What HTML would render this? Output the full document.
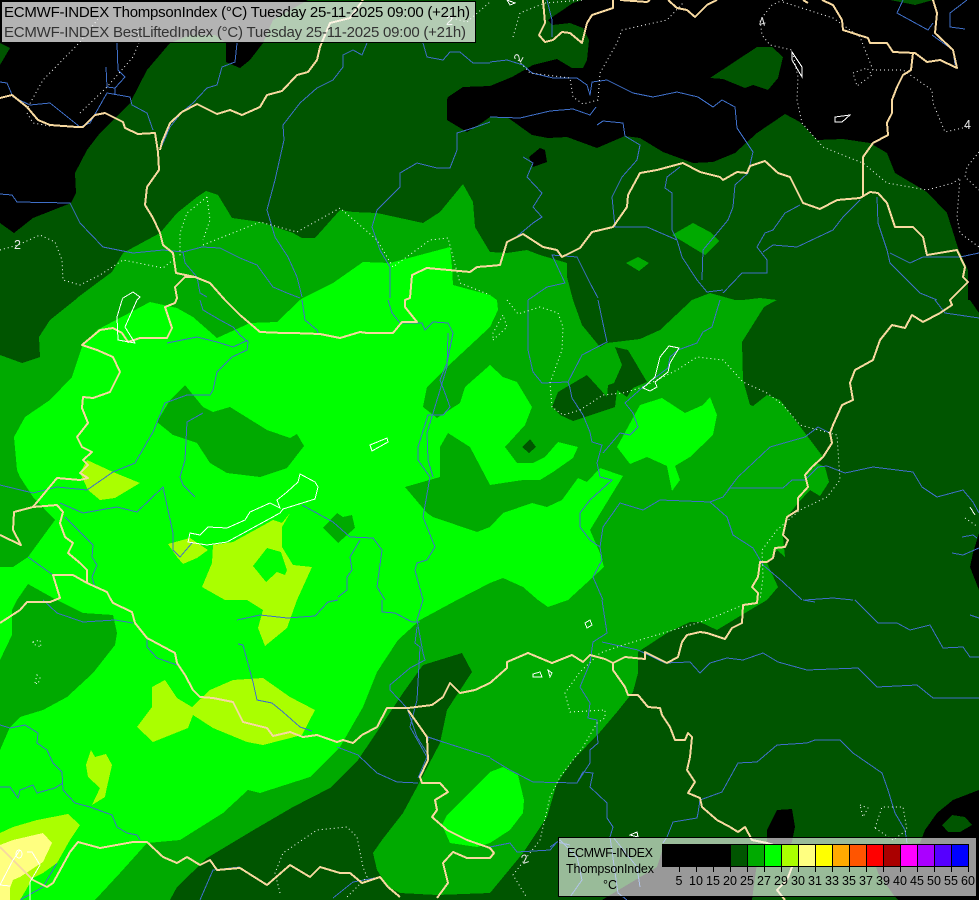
<!DOCTYPE html>
<html><head><meta charset="utf-8"><style>html,body{margin:0;padding:0;background:#005500}svg{display:block}text{font-family:"Liberation Sans",sans-serif}</style></head><body>
<svg xmlns="http://www.w3.org/2000/svg" width="979" height="900" viewBox="0 0 979 900">
<rect width="979" height="900" fill="#005500"/>
<g shape-rendering="crispEdges">
<g fill="#000">
<polygon points="0,0 308,0 273,20 263,43 250,60 240,68 226,62 226,43 215,35 190,35 170,43 147,70 130,103 100,133 87,150 75,173 76,193 71,203 33,218 14,233 0,223 0,65 10,48 0,43"/>
<polygon points="583,0 573,3 548,20 552,25 570,23 583,28 589,40 587,60 583,68 572,68 557,59 533,65 512,77 490,86 463,87 448,97 447,100 447,120 467,132 483,122 490,117 507,117 532,135 548,138 567,137 597,148 625,136 640,138 663,152 693,163 713,162 735,153 757,133 785,114 800,122 817,140 843,139 870,143 887,153 895,173 927,192 947,213 958,248 968,270 968,300 970,300 979,313 979,0 933,0 915,5 890,0"/>
<polygon points="979,533 973,553 970,567 979,590"/>
<polygon points="529,157 540,148 545,150 547,162 533,167"/>
<polygon points="602,900 657,867 663,848 767,847 767,830 777,810 792,809 795,827 792,842 787,847 757,863 752,900"/>
<polygon points="979,790 953,800 937,813 925,830 920,843 878,847 873,857 878,873 895,897 898,900 979,900"/>
</g>
<g fill="#005500">
<polygon points="710,78 757,47 772,47 783,57 778,78 768,90 753,85 745,88 723,79"/>
<polygon points="942,825 952,815 965,817 972,825 960,832 948,832"/>
</g>
<polygon fill="#00aa00" points="0,355 22,363 40,357 39,337 50,320 75,300 77,298 97,283 112,272 123,253 160,233 177,213 197,197 206,191 218,195 232,218 260,222 293,233 302,238 315,238 340,210 353,212 377,213 423,223 440,212 463,184 473,202 475,227 490,252 507,253 527,250 540,255 567,263 567,277 573,300 582,325 600,347 607,343 640,339 660,330 692,300 710,293 735,300 743,300 760,298 777,300 773,302 764,307 742,342 743,380 750,405 753,406 767,395 780,400 805,433 823,457 817,463 825,467 829,482 820,496 810,490 798,503 787,517 783,537 785,557 777,550 767,563 778,587 767,600 750,610 717,630 700,622 690,622 667,633 638,652 638,673 633,692 617,712 600,732 573,760 557,783 547,817 523,853 490,893 483,900 0,900"/>
<polygon fill="#00aa00" points="672,235 693,223 710,232 719,241 705,255"/>
<polygon fill="#00aa00" points="626,263 638,257 649,263 639,271"/>
<g fill="#005500">
<polygon points="615,347 628,350 647,382 633,388 627,397 617,390 615,407 573,421 560,415 552,407 558,392 587,375 607,397 608,385 614,383 622,365"/>
<polygon points="462,653 472,672 447,710 440,743 417,787 403,813 382,840 373,853 377,870 388,887 400,893 437,895 490,893 490,900 170,900 177,887 207,858 257,828 293,807 330,788 358,760 387,717 403,693 423,665"/>
</g>
<polygon fill="#00ff00" points="14,437 25,417 50,400 72,377 82,347 97,330 150,302 177,308 193,317 217,338 250,323 277,322 300,300 303,298 333,283 363,262 390,263 450,247 452,267 453,285 490,295 497,300 498,310 490,327 447,367 427,387 423,407 437,418 460,403 465,387 490,365 503,377 517,382 532,407 525,425 505,447 517,463 533,463 545,457 558,442 578,447 573,458 553,472 540,480 523,480 503,483 490,485 470,447 448,433 440,447 440,477 405,487 427,513 433,517 477,532 490,527 503,513 532,503 547,507 562,500 578,478 587,482 600,468 623,476 590,530 600,553 604,567 568,600 548,607 538,600 523,587 503,578 490,583 457,600 420,620 398,640 377,672 363,707 340,747 310,777 260,793 248,790 223,813 180,840 147,843 120,873 95,900 0,900 0,567 13,567 28,557 55,520 33,497 20,477 17,470"/>
<g fill="#00aa00">
<polygon points="157,422 170,400 185,385 203,407 213,412 230,407 267,430 290,438 297,434 304,446 287,468 260,477 227,473 210,463 197,443 173,435"/>
<polygon points="323,528 337,513 343,517 352,515 355,528 338,543"/>
<polygon points="17,600 28,584 53,598 57,600 83,613 113,615 117,633 115,645 93,673 67,697 43,710 20,717 10,727 0,750 0,660 12,635 12,610"/>
</g>
<g fill="#00ff00">
<polygon points="617,447 640,405 662,398 685,413 703,405 710,397 717,415 713,435 690,457 675,466 680,480 672,491 667,466 647,457 630,464"/>
<polygon points="490,772 503,767 518,775 524,800 523,813 510,830 490,843 477,847 450,843 442,825 447,815 467,795"/>
</g>
<polygon fill="#005500" points="522,447 530,439 536,447 529,453"/>
<g fill="#aaff00">
<polygon points="87,460 113,472 140,483 115,498 100,500 88,490 80,473"/>
<polygon points="168,544 190,538 208,550 197,558 183,564 177,557"/>
<polygon points="213,545 233,542 273,520 282,523 290,513 282,527 282,547 293,565 312,567 297,600 287,628 265,646 258,628 263,610 247,600 225,600 202,587 212,563"/>
<polygon points="137,727 152,707 152,687 165,680 177,698 192,707 210,690 233,680 263,678 290,697 315,710 302,735 263,745 247,742 213,728 193,715 188,728 153,742"/>
<polygon points="86,765 91,750 95,757 106,754 112,765 107,787 105,797 92,805 100,788 88,777"/>
<polygon points="0,833 13,827 37,820 68,814 80,825 70,840 57,863 43,873 33,878 20,900 0,900"/>
</g>
<polygon fill="#00ff00" points="253,566 267,548 281,552 287,570 285,575 277,572 266,582"/>
<polygon fill="#ffff80" points="0,845 13,840 43,833 52,843 43,862 20,877 13,880 10,888 10,900 0,900"/>
</g>

<!-- rivers -->
<g fill="none" stroke="#3f6fc8" stroke-width="1" stroke-linejoin="round" shape-rendering="crispEdges">
<polyline points="0,82 7,83 13,97 30,105 50,103 80,127 90,123 107,93 130,97 132,105 147,113 153,130"/>
<polyline points="117,43 118,70 125,77 115,88 107,87 106,67"/><polyline points="115,88 115,95"/>
<polyline points="237,43 235,62 222,67 217,85 207,88 193,103 182,112 170,127 160,150"/>
<polyline points="367,43 362,55 353,50 343,55 343,67 333,80 317,88 300,103 283,125 284,140 275,180 267,210 275,237 288,257 297,277 302,297"/>
<polyline points="423,43 427,57 443,60 450,52 460,52 473,63 490,63"/>
<polyline points="490,122 473,128 457,133 457,150 450,168 437,168 417,163 400,173 400,187 377,210 372,227 380,250 390,267 390,298"/>
<polyline points="0,194 12,195 17,202 70,203 80,223 103,247 133,253 163,250 183,252 202,247 220,248 240,258 257,265 273,287 287,293 300,298"/>
<polyline points="183,252 185,263 197,277 200,293 207,297"/>
<polyline points="200,300 203,310 220,320 233,327 240,335 248,342 247,350 232,357 217,372 213,390 210,395 187,395 165,403 153,432 135,463 113,472 87,490 57,487 33,493 0,485"/>
<polyline points="167,343 197,337 217,342 233,347 248,340"/>
<polyline points="203,413 187,422 185,460 180,477 183,485 195,497"/>
<polyline points="60,503 83,513 117,507 137,512 163,487 173,533 173,550 180,557 192,543"/>
<polyline points="65,517 93,545 92,557 97,565 92,577 95,587"/>
<polyline points="28,557 53,575"/>
<polyline points="302,505 333,522 350,537 373,538 382,550 377,587 385,600"/>
<polyline points="360,540 350,557 352,570 347,577 347,590 338,597"/>
<polyline points="302,300 305,320 317,330 318,333"/>
<polyline points="388,300 392,313 400,323 422,323 425,330 433,322 448,323 453,333 447,363 440,380 445,393 450,407 443,415 428,415 418,447 418,460 430,477 423,517 435,547 427,560 417,563 415,570 423,600 417,620 423,653 425,660 410,668 390,685 390,690 407,708 417,737 427,753 428,737 443,742 490,757"/>
<polyline points="448,333 447,367 427,433 428,460 433,477"/>
<polyline points="382,600 382,612 395,613 412,622 420,622"/>
<polyline points="417,627 415,643 420,647 417,700 410,727 427,757 418,778"/>
<polyline points="237,620 260,615 287,618 315,616 328,602 338,600"/>
<polyline points="238,644 243,645 253,682 257,700 272,703 283,712 300,727 312,731"/>
<polyline points="43,600 57,613 83,622 115,620 133,623"/>
<polyline points="147,638 147,647 157,658 177,665"/>
<polyline points="0,725 10,728 25,725 38,733 37,743 47,750 53,763 62,772 63,790 75,803 90,807 112,815 117,827 127,833 137,835 140,840"/>
<polyline points="0,787 10,787 18,798 20,790 33,785 37,793 55,788 63,783"/>
<polyline points="337,747 358,755 377,773 397,782 418,783"/>
<polyline points="200,900 213,870 240,867"/>
<polyline points="333,898 353,882 380,877"/>
<polyline points="57,863 43,887 20,900"/>
<polyline points="528,300 528,350 533,372 542,383 568,382 570,388 572,398 583,415 590,432 592,442 602,445 597,463 600,477 612,480 590,500 580,513 580,527 590,540 600,547 602,560 593,577 603,600"/>
<polyline points="598,300 605,333 607,342 582,355 568,382"/>
<polyline points="720,300 712,327 703,332 697,343 678,350 670,357 668,368 643,387 625,403 633,413 638,427 630,435 620,433 603,453"/>
<polyline points="603,527 620,503 643,510 660,500 710,502 723,497 730,488 783,488 792,480 805,480 818,467 827,466 845,473 873,467 913,472 922,487 937,497 963,490 973,502 979,513"/>
<polyline points="603,527 600,547"/>
<polyline points="710,502 727,517 733,535 753,548 763,565 783,582 802,600"/>
<polyline points="728,490 738,477 770,447 805,437 818,427 830,433"/>
<polyline points="935,300 945,313 979,318"/>
<polyline points="962,537 973,535 977,538"/><polyline points="952,553 963,555 979,548"/>
<polyline points="805,600 833,598 853,600"/>
<polyline points="490,62 507,60 523,65 532,73 553,78 577,78 587,85 590,95 592,82 607,80 633,93 653,97 677,92 698,97 713,107 722,100 735,107 737,128 753,152 748,173 735,185 733,207 728,220 703,250 702,280"/>
<polyline points="490,117 520,118 550,111 573,109 590,115 596,107"/>
<polyline points="597,125 603,121 623,123 625,136 640,145 637,160 622,177 612,197 615,227 647,227 677,240 682,257 697,280 707,292 723,290"/>
<polyline points="523,157 533,163 527,177 542,193 533,207 542,217 533,223 515,238"/>
<polyline points="680,167 667,177 665,188 672,193 672,230 677,240"/>
<polyline points="800,205 785,213 773,230 765,233 757,247 767,260 767,273 742,273 723,293"/>
<polyline points="860,200 843,217 833,230 797,247 773,245 763,252"/>
<polyline points="877,197 878,223 887,250 890,263 920,293 937,300"/>
<polyline points="890,253 910,263 923,257 960,257 979,253"/>
<polyline points="903,0 897,13 928,30 933,23"/>
<polyline points="967,0 950,13 950,27 965,29"/>
<polyline points="528,300 547,287 565,283 552,255 577,257 590,283 598,298"/>
<polyline points="932,35 953,50 955,65"/>
<polyline points="547,0 552,20 552,37"/>
<polyline points="490,758 510,770 533,782 577,783 583,772 593,773 590,787 607,803 607,818 613,827 610,837 618,893 627,900"/>
<polyline points="602,600 607,633 593,642 590,663 580,687 590,703 588,718 597,720 597,733 598,743 590,750 590,763 577,783"/>
<polyline points="602,642 638,650 665,663 690,662 700,673 710,663 727,658 743,660 763,653 778,662 807,670 858,668 877,687 917,685 933,698 979,698"/>
<polyline points="855,600 878,623 897,623 910,630 930,625 943,648 963,647 970,657 979,657"/>
<polyline points="970,615 979,618"/><polyline points="803,600 815,602"/>
<polyline points="700,800 722,792 738,763 757,762 777,745 807,743 815,740 840,740 853,753 882,773 888,790 895,813 905,830 907,843"/>
<polyline points="700,800 698,813 697,818 673,822 667,837 663,843"/>
<polyline points="490,847 510,843 517,852 550,850 557,842 570,845"/>
<polyline points="550,847 560,840 577,857 582,880 570,897"/>
<polyline points="613,837 637,867 640,887"/>
</g>

<!-- dotted contours -->
<g fill="none" stroke="#fff" stroke-width="1" stroke-dasharray="1 3">
<polyline points="0,250 18,245 40,235 55,242 62,260 63,280 80,285 100,275 123,260 163,268 173,260"/>
<polyline points="207,197 187,213 180,233 180,257"/><polyline points="207,197 210,220 203,240"/>
<polyline points="203,245 260,222 297,232 340,208 377,240 393,267 430,240 448,238 460,283 490,295"/>
<polyline points="28,107 43,80 80,42 105,10"/><polyline points="27,113 33,123 50,126"/>
<polyline points="80,113 107,87 133,57 140,40 137,30"/>
<polyline points="448,17 467,22 490,2"/>
<polyline points="513,37 520,13 545,3 583,0"/>
<polyline points="518,60 530,73 570,78 573,97 583,104 598,100 600,73 617,43 622,30 667,20 683,3"/>
<polyline points="783,0 772,5 760,20 762,35 770,45 792,50 798,77 797,100 802,123 823,147 850,158 863,163 887,183 927,190 953,183 960,178 957,217 960,233 979,247"/>
<polyline points="783,2 833,18 860,37 873,70 903,70 932,90 933,103 945,132 967,127"/>
<polygon points="853,73 867,68 872,75 857,86"/>
<polyline points="979,152 967,167 965,177 979,190"/>
<polyline points="507,300 518,314 540,307 558,313 563,327 562,350 550,383 552,407 563,415 580,410 603,395 623,393 643,387 677,370 697,357 723,360 743,382 767,393 783,405 800,425 837,435 840,480 827,497 800,510 777,530 762,550 763,577 760,600"/>
<polygon points="493,340 507,327 503,315 493,333"/>
<polyline points="280,893 275,873 283,853 317,830 347,827 357,837 363,867 367,877 347,897"/>
<polygon points="33,642 40,640 41,647 33,644"/><polygon points="35,683 37,675 40,678 38,684"/>
<polyline points="743,605 707,620 623,645 600,653 580,672 565,693 570,712 605,710 605,718 597,723 583,747 560,777 550,797 540,840 513,875 527,898"/>
<polygon points="860,805 868,808 863,817"/>
<polygon points="875,828 882,807 903,807 907,830 893,840"/>
<polyline points="965,518 978,527"/>
</g>

<!-- borders -->
<g fill="none" stroke="#f7d9a0" stroke-width="2" stroke-linejoin="round" shape-rendering="crispEdges">
<polyline points="0,98 12,95 27,107 38,120 50,125 77,127 83,127 95,115 105,113 117,119 123,122 125,128 138,134 155,133 158,152 159,170 147,187 145,205 153,218 160,233 163,245 173,253 176,273 195,277 210,283 225,300 227,302 240,315 260,332 283,333 293,333 320,334 340,338 360,332 367,333 393,333 402,322 417,322 405,307 405,300 410,298 412,275 427,268 470,272 477,267 490,266 500,265 507,242 523,234 543,247 557,250 562,257 580,248 592,232 613,227 627,207 628,195 640,173 657,170 683,163 700,172 720,177 723,180 737,172 747,173 750,166 765,161 778,173 790,177 803,203 820,209 837,200 860,198 870,192 878,193 887,203 895,227 913,227 923,237 927,255 957,250 965,267 963,277 968,282 950,300 952,305 940,313 923,322 912,315 905,328 892,325 880,340 873,360 855,370 850,383 853,400 842,405 833,425 830,433 832,443 823,457 812,467 805,475 808,487 798,498 798,510 787,517 783,535 788,540 785,547 775,548 773,558 767,562 760,562 758,577 752,587 758,593 757,603 743,605 742,623 732,628 725,639 713,635 707,633 700,632 687,635 682,642 678,657 667,663 645,652 645,659 625,657 613,663 605,659 590,655 583,662 572,655 552,663 528,653 507,662 507,668 490,683 475,690 460,693 450,683 443,697 432,705 408,708 387,708 377,727 362,735 353,743 343,740 337,742 317,735 303,737 290,732 273,736 267,728 243,722 233,702 213,698 200,697 193,690 185,675 177,663 175,653 147,638 135,623 132,612 113,603 110,598 107,592 87,583 87,570 80,563 68,553 73,543 65,537 60,523 63,512 57,505 33,507 14,512 13,530 21,545 0,535"/>
<polyline points="160,150 162,142 170,123 182,112 197,104 217,114 230,110 242,115 260,107 267,95 282,91 297,75 308,72 317,60 320,47 330,23 350,18 363,0"/>
<polyline points="33,507 57,478 80,480 88,478 80,473 88,465 83,460 92,452 82,447 77,437 88,423 82,408 83,397 93,398 110,392 120,372 113,357 97,350 82,345 100,330 113,328 122,333 128,342 140,338 167,338 172,328 165,307 175,303 177,298 175,287 185,277 195,277"/>
<polyline points="0,623 20,610 27,602 50,602 60,598 53,575 73,575 87,583"/>
<polyline points="0,847 13,860 33,880 47,887 53,883 70,852 78,842 100,848 133,842 147,842 163,857 177,863 187,857 200,865 210,860 217,870 240,868 267,885 290,865 310,877 320,867 340,873 350,873 362,883 380,877 388,887 400,897"/>
<polyline points="437,898 448,883 443,863 453,852 467,858 490,858 494,853 490,848 467,840 447,830 432,817 437,810 435,800 448,792 440,783 422,783 420,777 428,760 427,737 408,710"/>
<polyline points="613,663 613,670 625,687 628,695 638,695 648,707 660,708 662,715 670,727 675,740 685,740 688,733 692,737 690,757 687,770 695,782 688,793 700,798 702,807 717,820 730,827 738,832 745,827 752,840 767,843 790,850 792,867 787,880 777,890 785,900"/>
<polyline points="863,197 863,157 873,143 888,135 887,123 892,113 892,100 897,87 903,75 911,70 913,53"/>
<polyline points="822,0 833,5 842,20 843,30 868,38 870,43 887,43 893,52 915,53 927,62 940,60 957,68 953,50 935,33 937,13 933,0"/>
<polyline points="543,0 545,23 539,35 545,42 553,40 562,32 570,33 582,43 587,23 592,15 613,8 613,0"/>
<polyline points="620,0 647,2 650,0"/>
<polyline points="668,0 677,8 687,10 695,17 707,5 717,0"/>
<polyline points="803,0 808,3"/>
</g>

<!-- lakes -->
<g fill="none" stroke="#fff" stroke-width="1" shape-rendering="crispEdges">
<polygon points="123,298 133,292 140,297 137,300 125,327 135,343 118,340 117,317 122,300"/>
<polygon points="300,474 298,482 287,492 277,500 280,508 270,503 250,512 245,520 227,528 208,527 200,535 190,533 188,542 207,545 227,542 280,513 283,509 315,499 318,487 315,482"/>
<polygon points="370,445 387,438 388,442 372,451"/>
<polygon points="669,346 679,348 670,363 668,372 655,382 657,387 650,391 643,388 655,377 660,357"/>
<polygon points="792,52 802,67 802,77 792,60"/>
<polygon points="835,117 850,115 842,122 835,122"/>
<polygon points="507,0 515,3 510,5"/>
<polygon points="585,623 590,620 592,625 587,628"/>
<polygon points="533,674 540,672 542,677 533,677"/>
<polygon points="548,670 552,673 550,677"/>
<polygon points="630,835 637,832 638,837"/>
<polyline points="970,507 975,515"/>
<polyline points="0,885 13,860 20,850"/><polyline points="0,885 10,886"/>
<polyline points="27,852 32,852 40,865 30,882 30,900"/>
<ellipse cx="19" cy="854" rx="3" ry="4"/>
</g>

<!-- contour labels -->
<g fill="#e8e8e8" font-size="12.5">
<text x="14" y="249">2</text>
<text x="514" y="62" transform="rotate(-60 518 57)">2</text>
<text x="446" y="25">2</text>
<text x="758" y="26" transform="rotate(-15 762 20)">4</text>
<text x="964" y="129">4</text>
<text x="521" y="863" transform="rotate(-20 525 858)">2</text>
</g>

<!-- title panel -->
<rect x="1.5" y="1.5" width="474" height="41" fill="#fff" fill-opacity=".7" stroke="#000" stroke-width="1" shape-rendering="crispEdges"/>
<text x="4" y="17" font-size="15" fill="#000" textLength="466" lengthAdjust="spacing">ECMWF-INDEX ThompsonIndex (°C) Tuesday 25-11-2025 09:00 (+21h)</text>
<text x="4" y="37" font-size="15" fill="#333" textLength="462" lengthAdjust="spacing">ECMWF-INDEX BestLiftedIndex (°C) Tuesday 25-11-2025 09:00 (+21h)</text>

<!-- legend -->
<rect x="558.5" y="837.5" width="418" height="59" fill="#fff" fill-opacity=".6" stroke="#000" stroke-width="1" shape-rendering="crispEdges"/>
<text x="610" y="857" font-size="12.5" fill="#000" text-anchor="middle" textLength="86" lengthAdjust="spacing">ECMWF-INDEX</text>
<text x="610" y="873" font-size="12.5" fill="#000" text-anchor="middle" textLength="88" lengthAdjust="spacing">ThompsonIndex</text>
<text x="610" y="889" font-size="12.5" fill="#000" text-anchor="middle">°C</text>
<g shape-rendering="crispEdges" stroke="#000" stroke-width="1">
<rect x="662.5" y="844.5" width="17" height="22" fill="#000"/>
<rect x="679.5" y="844.5" width="17" height="22" fill="#000"/>
<rect x="696.5" y="844.5" width="17" height="22" fill="#000"/>
<rect x="713.5" y="844.5" width="17" height="22" fill="#000"/>
<rect x="730.5" y="844.5" width="17" height="22" fill="#005500"/>
<rect x="747.5" y="844.5" width="17" height="22" fill="#00aa00"/>
<rect x="764.5" y="844.5" width="17" height="22" fill="#00ff00"/>
<rect x="781.5" y="844.5" width="17" height="22" fill="#aaff00"/>
<rect x="798.5" y="844.5" width="17" height="22" fill="#ffff80"/>
<rect x="815.5" y="844.5" width="17" height="22" fill="#ffff00"/>
<rect x="832.5" y="844.5" width="17" height="22" fill="#ffaa00"/>
<rect x="849.5" y="844.5" width="17" height="22" fill="#ff5500"/>
<rect x="866.5" y="844.5" width="17" height="22" fill="#ff0000"/>
<rect x="883.5" y="844.5" width="17" height="22" fill="#aa0000"/>
<rect x="900.5" y="844.5" width="17" height="22" fill="#ff00ff"/>
<rect x="917.5" y="844.5" width="17" height="22" fill="#aa00ff"/>
<rect x="934.5" y="844.5" width="17" height="22" fill="#5500ff"/>
<rect x="951.5" y="844.5" width="17" height="22" fill="#0000ff"/>
<path d="M679.5 866v6M696.5 866v6M713.5 866v6M730.5 866v6M747.5 866v6M764.5 866v6M781.5 866v6M798.5 866v6M815.5 866v6M832.5 866v6M849.5 866v6M866.5 866v6M883.5 866v6M900.5 866v6M917.5 866v6M934.5 866v6M951.5 866v6M968.5 866v6" fill="none"/>
</g>
<g font-size="12.5" fill="#000" text-anchor="middle">
<text x="679" y="885">5</text><text x="696" y="885">10</text><text x="713" y="885">15</text><text x="730" y="885">20</text><text x="747" y="885">25</text><text x="764" y="885">27</text><text x="781" y="885">29</text><text x="798" y="885">30</text><text x="815" y="885">31</text><text x="832" y="885">33</text><text x="849" y="885">35</text><text x="866" y="885">37</text><text x="883" y="885">39</text><text x="900" y="885">40</text><text x="917" y="885">45</text><text x="934" y="885">50</text><text x="951" y="885">55</text><text x="968" y="885">60</text>
</g>
</svg>
</body></html>
